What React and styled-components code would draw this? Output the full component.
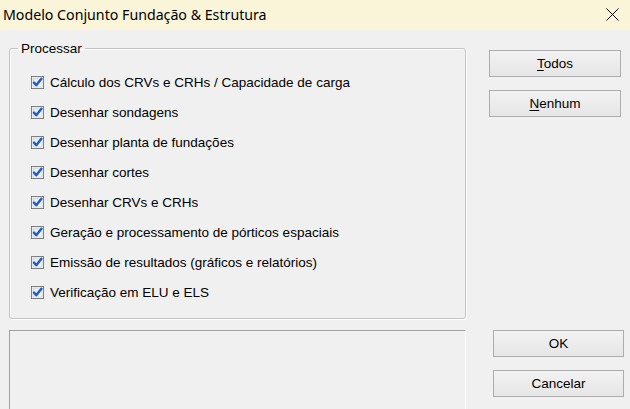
import React from 'react';
import styled, { createGlobalStyle } from 'styled-components';

const Global = createGlobalStyle`
  html, body { margin: 0; padding: 0; background: #f0f0f0; }
  * { box-sizing: border-box; }
`;

const Window = styled.div`
  width: 630px;
  height: 409px;
  overflow: hidden;
  background: #f0f0f0;
  font-family: "Liberation Sans", Arial, sans-serif;
  font-size: 13.5px;
  color: #000;
`;

const TitleBar = styled.div`
  height: 30px;
  background: #faf5d9;
  display: flex;
  align-items: center;
  justify-content: space-between;
  padding: 0 11px 1px 3px;
`;

const Title = styled.div`
  font-family: "Noto Sans", "Open Sans", sans-serif;
  font-size: 14.2px;
  color: #000;
`;

const Row = styled.div`
  display: flex;
  align-items: flex-start;
  padding-left: 9px;
  margin-top: ${p => p.$top}px;
`;

const Group = styled.fieldset`
  width: 457px;
  margin: 0;
  padding: 11px 0 11px 21px;
  border: 1px solid #c3c3c3;
  border-radius: 3px;
  box-shadow: 1px 1px 0 #fff, inset 1px 1px 0 #fff;
`;

const Legend = styled.legend`
  margin-left: -13px;
  padding: 0 3px;
  line-height: 15px;
  font-size: 13.5px;
`;

const Item = styled.label`
  display: flex;
  align-items: center;
  height: 30px;
  gap: 6px;
  white-space: nowrap;
`;

const ButtonColumn = styled.div`
  display: flex;
  flex-direction: column;
  gap: 13px;
  margin-left: ${p => p.$gap}px;
  margin-top: ${p => p.$top}px;
`;

const Button = styled.button`
  width: ${p => p.$w || 132}px;
  height: 27px;
  padding: 0;
  border: 1px solid #adadad;
  background: linear-gradient(#f2f2f2, #e6e6e6);
  font-family: "Liberation Sans", Arial, sans-serif;
  font-size: 13.5px;
  color: #000;
  u { text-decoration: underline; text-underline-offset: 2px; }
`;

const Panel = styled.div`
  width: 457px;
  height: 90px;
  border-top: 1px solid #a0a0a0;
  border-left: 1px solid #a0a0a0;
  border-right: 1px solid #fff;
`;

function Check() {
  return (
    <svg width="13" height="13" viewBox="0 0 13 13">
      <defs>
        <linearGradient id="cb" x1="0" y1="0" x2="1" y2="1">
          <stop offset="0" stopColor="#dfe6ee" />
          <stop offset="1" stopColor="#f7f9fb" />
        </linearGradient>
      </defs>
      <rect x="0.5" y="0.5" width="12" height="12" fill="#f4f4f4" stroke="#7f7f7f" />
      <rect x="2" y="2" width="9" height="9" fill="url(#cb)" stroke="#c7ccd3" strokeWidth="0.6" />
      <path d="M3 6.6 L5.3 9.2 L10.4 2.8" fill="none" stroke="#1a5ccc" strokeWidth="2.4" strokeLinecap="round" strokeLinejoin="round" />
    </svg>
  );
}

const items = [
  'Cálculo dos CRVs e CRHs / Capacidade de carga',
  'Desenhar sondagens',
  'Desenhar planta de fundações',
  'Desenhar cortes',
  'Desenhar CRVs e CRHs',
  'Geração e processamento de pórticos espaciais',
  'Emissão de resultados (gráficos e relatórios)',
  'Verificação em ELU e ELS',
];

export default function App() {
  return (
    <Window>
      <Global />
      <TitleBar>
        <Title>Modelo Conjunto Fundação &amp; Estrutura</Title>
        <svg width="13" height="13" viewBox="0 0 13 13">
          <path d="M0.5 0.5 L12.5 12.5 M12.5 0.5 L0.5 12.5" stroke="#000" strokeWidth="1" />
        </svg>
      </TitleBar>
      <Row $top={11}>
        <Group>
          <Legend>Processar</Legend>
          {items.map(t => (
            <Item key={t}>
              <Check />
              {t}
            </Item>
          ))}
        </Group>
        <ButtonColumn $gap={23} $top={9}>
          <Button><u>T</u>odos</Button>
          <Button><u>N</u>enhum</Button>
        </ButtonColumn>
      </Row>
      <Row $top={11}>
        <Panel />
        <ButtonColumn $gap={27} $top={0}>
          <Button $w={131}>OK</Button>
          <Button $w={131}>Cancelar</Button>
        </ButtonColumn>
      </Row>
    </Window>
  );
}
